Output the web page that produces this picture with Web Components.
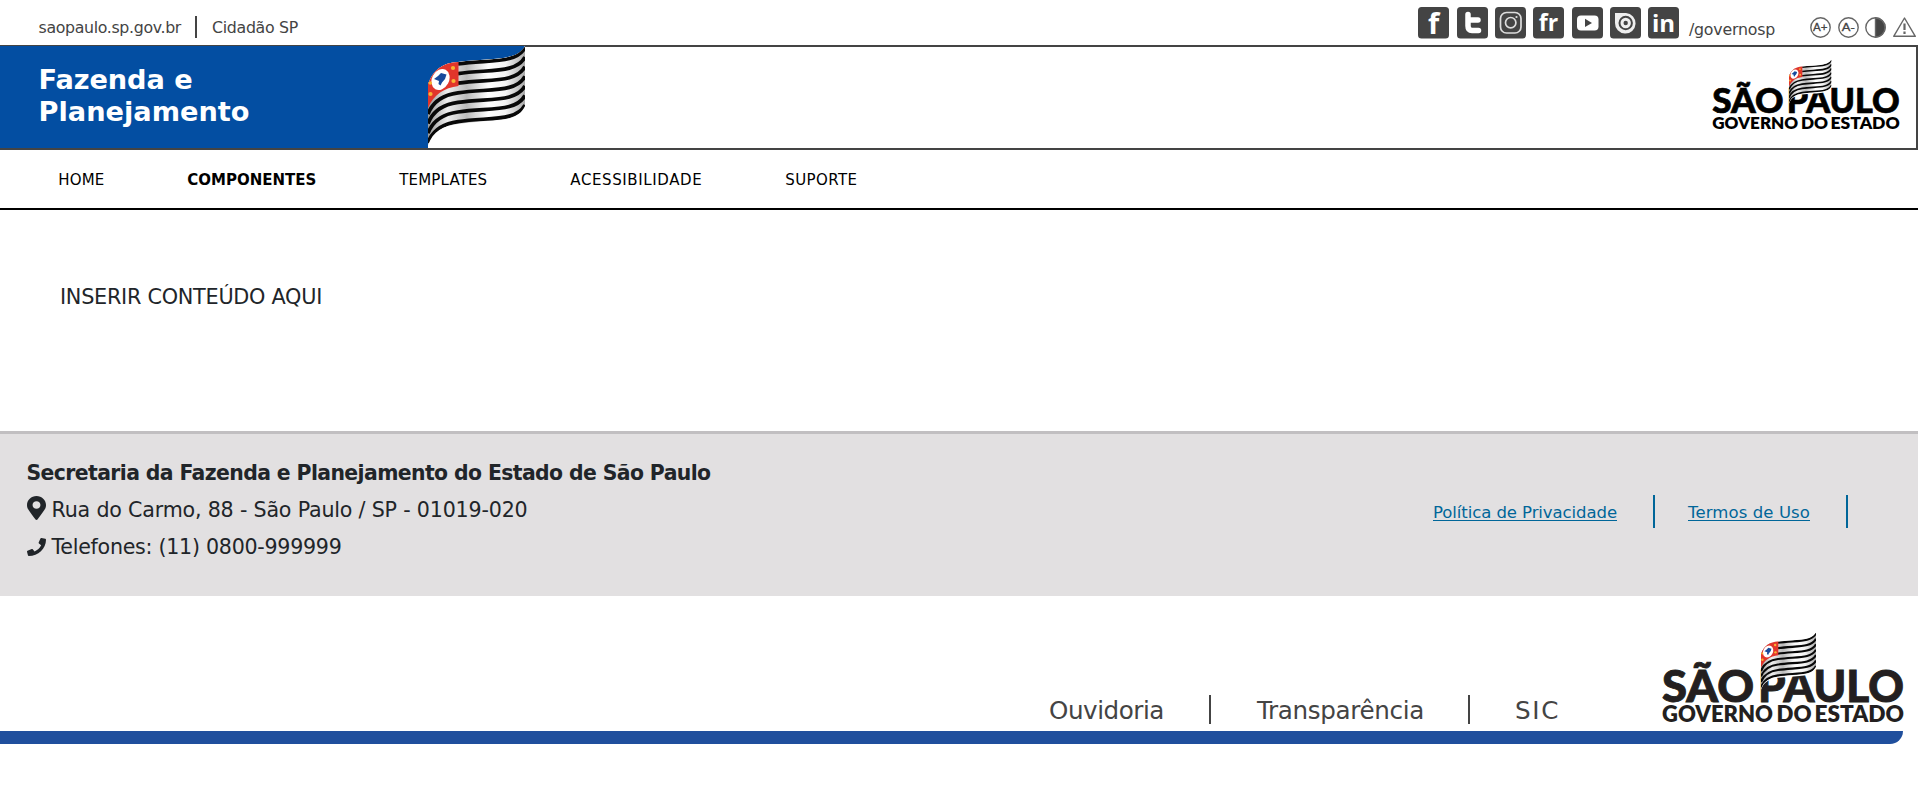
<!DOCTYPE html>
<html lang="pt-BR">
<head>
<meta charset="utf-8">
<title>Fazenda e Planejamento</title>
<style>
html,body{margin:0;background:#fff}
body{font-family:Verdana,"DejaVu Sans",sans-serif;color:#212529;overflow:hidden}
</style>
</head>
<body>
<sp-page></sp-page>
<script>
const define = (name, html, after) => customElements.define(name, class extends HTMLElement {
  connectedCallback() {
    if (this.shadowRoot) return;
    const t = document.createElement('template');
    t.innerHTML = typeof html === 'function' ? html(this) : html;
    this.attachShadow({mode: 'open'}).append(t.content.cloneNode(true));
    if (after) after(this);
  }
});

/* One line of text tracked to a given advance width: s = size, w = width, l = line height. */
define('sp-text', el => `<style>
:host{display:block;flex:none;white-space:nowrap;width:${el.getAttribute('w')}px;font-size:${el.getAttribute('s')}px;line-height:${el.getAttribute('l') || 20}px}
span{display:inline-block;text-decoration:var(--line,none);text-decoration-thickness:1px;text-underline-offset:2px}
</style><span><slot></slot></span>`, el => {
  const s = el.shadowRoot.querySelector('span');
  const n = el.textContent.length;
  s.style.letterSpacing = (el.getAttribute('w') - s.getBoundingClientRect().width) / n + 'px';
});

/* Waving state flag, drawn on a 97 x 102 field. */
const flag = id => {
  let s = '';
  for (let i = 0; i < 7; i++) {
    const y = 18 + 9.6 * i, r = 1.5 + 9.6 * i;
    const right = `C62 ${y - 4.5} 88 ${y} 97 ${r}`;
    s += i < 3 ? `<path d="M30 ${y}${right}"/>`
      : `<path d="M0 ${68 + (i - 3) * 9.6}C5 ${y + 8} 15 ${y + 2} 30 ${y}${right}"/>`;
  }
  return `<defs><linearGradient id="${id}" x1="0" x2="1"><stop offset="0" stop-color="#999"/><stop offset=".2" stop-color="#eee"/><stop offset=".4" stop-color="#bbb"/><stop offset=".62" stop-color="#fff"/><stop offset=".8" stop-color="#f4f4f4"/><stop offset="1" stop-color="#aaa"/></linearGradient>
  <clipPath id="${id}c"><path d="M0 38C6 22 16 17 30 16C62 12 88 16 97 0V60C88 79 62 73 30 78C15 80 5 85 0 99Z"/></clipPath></defs>
  <g clip-path="url(#${id}c)"><path fill="url(#${id})" d="M0 0H97V102H0Z"/>
  <g fill="none" stroke="#080808" stroke-width="3.700">${s}</g>
  <path fill="#e1352b" d="M0 12H30.5V40C16 42 6 48 0 62Z"/></g>
  <ellipse cx="12.5" cy="33.5" rx="8.5" ry="11" transform="rotate(28 12.5 33.5)" fill="#fff"/>
  <path fill="#174a9c" d="M6 33L10 30 13 27 18.500 28.500 17 33 14 36.500 12.500 39.500 10.500 38 11 35Z"/>
  <g fill="#f9b233"><circle cx="25" cy="22" r="2.1"/><circle cx="25.500" cy="35" r="2.1"/><circle cx="2.300" cy="37" r="1.800"/><circle cx="2.500" cy="48" r="2.1"/></g>`;
};
define('sp-flag', `<style>:host{display:block;width:97px;height:102px}svg{display:block}</style>
<svg width="97" height="102" viewBox="0 0 97 102"><path fill="#fff" d="M0 38C6 22 16 17 30 16C62 12 88 16 97 0V102H0Z"/>${flag('f')}</svg>`);

define('sp-logo', `<style>:host{display:block}svg{display:block;width:100%;height:100%;overflow:visible}text{font-family:Lato,Inter,sans-serif}.a{font-weight:900;font-size:43.500px;stroke:currentColor;stroke-width:.9px}.b{font-weight:800;font-size:22px}</style>
<svg viewBox="0 0 240 90" fill="currentColor">
<text class="a" x="-1" y="70" textLength="92" lengthAdjust="spacingAndGlyphs">SÃO</text>
<text class="a" x="95" y="70" textLength="146" lengthAdjust="spacingAndGlyphs">PAULO</text>
<text class="b" x="-1" y="90" textLength="111" lengthAdjust="spacingAndGlyphs">GOVERNO</text>
<text class="b" x="113.500" y="90" textLength="35" lengthAdjust="spacingAndGlyphs">DO</text>
<text class="b" x="151.500" y="90" textLength="89.500" lengthAdjust="spacingAndGlyphs">ESTADO</text>
<g transform="translate(98 .5) scale(.567)"><path fill="#fff" d="M0 38C6 22 16 17 30 16C62 12 88 16 97 0V62C88 81 62 75 30 80C15 82 5 87 0 101Z"/>${flag('g')}</g></svg>`);

const letters = (t, s, x = 15.5, y = 25) => `<text x="${x}" y="${y}" font-size="${s}" text-anchor="middle">${t}</text>`;
const social = {
  f: letters('f', 29, 15.5, 26.5), t: '<path fill="none" stroke="#fff" stroke-width="5.500" stroke-linecap="round" stroke-linejoin="round" d="M11 7.500V19Q11 23.500 15 23.500H21.500M11 13H21"/>',
  ig: '<g fill="none" stroke="#ddd" stroke-width="1.700"><rect x="5.500" y="5.500" width="20.500" height="20.500" rx="6"/><circle cx="15.700" cy="15.700" r="5.200"/></g><circle cx="21.500" cy="10" r="1.100" fill="#ddd"/>',
  fr: letters('fr', 23, 15.5, 24),
  yt: '<rect x="5" y="8.500" width="21.500" height="15" rx="4" fill="#fff"/><path fill="#444" d="M13 11.700V20L20 16Z"/>',
  is: '<path fill="#eee" d="M5 6H16A10.300 10.300 0 1 1 5 16Z"/><circle cx="15.700" cy="16" r="6.200" fill="none" stroke="#444" stroke-width="2"/><circle cx="15.700" cy="16" r="2.200" fill="#444"/>',
  in: letters('in', 24, 15.5, 24.5)
};
define('sp-social', el => `<style>:host{display:block;width:31px;height:31.500px}svg{display:block;overflow:visible}text{font-family:"Open Sans",sans-serif;font-weight:700}</style>
<svg width="31" height="31.500" viewBox="0 0 31 31.500"><rect width="31" height="31.500" rx="3.500" fill="#444"/><g fill="#fff">${social[el.getAttribute('name')]}</g></svg>`);

const tools = {
  plus: '<circle cx="10.500" cy="10.500" r="9.700"/><text x="10.300" y="14.200" textLength="14.500" lengthAdjust="spacingAndGlyphs">A+</text>',
  minus: '<circle cx="10.500" cy="10.500" r="9.700"/><text x="10.300" y="14.200" textLength="13" lengthAdjust="spacingAndGlyphs">A-</text>',
  contrast: '<circle cx="10.500" cy="10.500" r="9.700"/><path fill="#444" d="M10.500 1A9.500 9.500 0 0 1 10.500 20Z"/>',
  alert: '<path stroke-linejoin="round" d="M11.500 1L22.300 19.300H.7Z"/><path stroke-width="2.200" d="M11.500 6.500V13M11.500 14.500V17"/>'
};
define('sp-tool', el => `<style>:host{display:block}svg{display:block;overflow:visible}text{font:11.500px "Liberation Sans",sans-serif;fill:#444;stroke:#444;stroke-width:.3px;text-anchor:middle}</style>
<svg width="${el.getAttribute('name') === 'alert' ? 23 : 21}" height="21" fill="none" stroke="#666" stroke-width="1.400">${tools[el.getAttribute('name')]}</svg>`);

define('sp-topbar', `<style>
:host{display:flex;height:45px;color:#444;align-items:flex-start}
.links{display:flex;flex:1;padding:16px 0 0 38.500px}
.links sp-text{padding-top:2px}
i{width:2px;height:22px;background:#444;margin:0 15px 0 14px}
.social{display:flex;gap:7.330px;padding-top:7px;margin-right:9.500px}
.gov{padding-top:19.500px}
.tools{display:flex;gap:6.700px;padding-top:16.500px;margin:0 2px 0 35px}
</style>
<div class="links"><sp-text s="15.8" w="142.5">saopaulo.sp.gov.br</sp-text><i></i><sp-text s="15.8" w="86">Cidadão SP</sp-text></div>
<div class="social">${Object.keys(social).map(n => `<sp-social name="${n}"></sp-social>`).join('')}</div>
<sp-text class="gov" s="15.8" w="86">/governosp</sp-text>
<div class="tools">${Object.keys(tools).map(n => `<sp-tool name="${n}"></sp-tool>`).join('')}</div>`);

define('sp-header', `<style>
:host{display:flex;justify-content:space-between;box-sizing:border-box;height:105px;border:2px solid #444;border-left:0}
.brand{display:flex;justify-content:space-between;width:525px;height:102px;margin-top:-1px;background:#034ea2;color:#fff;font-weight:700}
.name{padding:18px 0 0 38.500px}
sp-logo{width:186px;height:69.750px;margin:11.500px 17px 0 0;color:#000}
</style>
<div class="brand"><div class="name"><sp-text s="27.2" l="32" w="154">Fazenda e</sp-text><sp-text s="27.2" l="32" w="211">Planejamento</sp-text></div><sp-flag></sp-flag></div>
<sp-logo></sp-logo>`);

define('sp-nav', `<style>
:host{display:flex;gap:83px;height:58px;border-bottom:2px solid #000;color:#000;padding-left:58.300px}
sp-text{padding-top:19.500px}.on{font-weight:700}
</style>
<sp-text s="15" w="46">HOME</sp-text><sp-text class="on" s="15" w="129">COMPONENTES</sp-text><sp-text s="15" w="88">TEMPLATES</sp-text><sp-text s="15" w="132">ACESSIBILIDADE</sp-text><sp-text s="15" w="72">SUPORTE</sp-text>`);

define('sp-contact', `<style>
:host{display:flex;justify-content:space-between;height:162px;background:#e2e0e1;border-top:3px solid #c1bfc1}
.info{padding:20.500px 0 0 26.500px}
b{display:block}
.row{display:flex;align-items:center;height:37px}
.row svg{width:19px;margin-right:6px}
.pin{margin-top:-4px}
.links{display:flex;color:#069;padding:61px 70px 0 0}
.links sp-text{--line:underline;padding-top:7.500px}
i{width:2px;height:33px;background:#069}
</style>
<div class="info">
<b><sp-text s="20.4" l="37" w="684">Secretaria da Fazenda e Planejamento do Estado de São Paulo</sp-text></b>
<div class="row"><svg class="pin" height="24" viewBox="0 0 384 512" preserveAspectRatio="none" fill="currentColor"><path d="M172.268 501.670C26.970 291.031 0 269.413 0 192 0 85.961 85.961 0 192 0s192 85.961 192 192c0 77.413-26.970 99.031-172.268 309.670-9.535 13.774-29.930 13.773-39.464 0zM192 272c44.183 0 80-35.817 80-80s-35.817-80-80-80-80 35.817-80 80 35.817 80 80 80z"/></svg><sp-text s="20.6" l="37" w="476">Rua do Carmo, 88 - São Paulo / SP - 01019-020</sp-text></div>
<div class="row"><svg height="18" viewBox="0 0 512 512" preserveAspectRatio="none" fill="currentColor"><path d="M493.400 24.600l-104-24c-11.300-2.600-22.900 3.300-27.500 13.900l-48 112c-4.200 9.800-1.400 21.300 6.900 28l60.600 49.600c-36 76.700-98.900 140.500-177.200 177.200l-49.600-60.600c-6.800-8.300-18.200-11.100-28-6.900l-112 48C3.900 366.500-2 378.100.6 389.400l24 104C27.100 504.200 36.700 512 48 512c256.100 0 464-207.500 464-464 0-11.200-7.700-20.900-18.600-23.400z"/></svg><sp-text s="20.6" l="37" w="290">Telefones: (11) 0800-999999</sp-text></div>
</div>
<div class="links"><sp-text s="16.5" w="184">Política de Privacidade</sp-text><i style="margin:0 33px 0 36px"></i><sp-text s="16.5" w="122">Termos de Uso</sp-text><i style="margin-left:36px"></i></div>`);

define('sp-footer', `<style>
:host{display:block;width:1903px}
.row{display:flex;justify-content:flex-end;height:135px;color:#444}
.row sp-text{padding-top:99px}
i{width:2px;height:29px;background:#444;margin:99px 46px 0 45px}
i+sp-text+i{margin:99px 45px 0 44px}
sp-logo{width:240px;height:90px;margin:36px 0 0 103px;color:#231f20}
.bar{height:13px;background:#204f9d;border-bottom-right-radius:13px}
</style>
<div class="row"><sp-text s="24.6" l="32" w="115">Ouvidoria</sp-text><i></i><sp-text s="24.6" l="32" w="167">Transparência</sp-text><i></i><sp-text s="24.6" l="32" w="45">SIC</sp-text><sp-logo></sp-logo></div>
<div class="bar"></div>`);

define('sp-page', `<style>
:host{display:flex;flex-direction:column;height:786px}
main{height:146px;padding:75px 0 0 60px;box-sizing:content-box}
sp-contact,sp-nav,sp-topbar,sp-header{flex:none}
</style>
<sp-topbar></sp-topbar><sp-header></sp-header><sp-nav></sp-nav>
<main><sp-text s="20.8" w="262" l="24">INSERIR CONTEÚDO AQUI</sp-text></main>
<sp-contact></sp-contact><sp-footer></sp-footer>`);
</script>
</body>
</html>
